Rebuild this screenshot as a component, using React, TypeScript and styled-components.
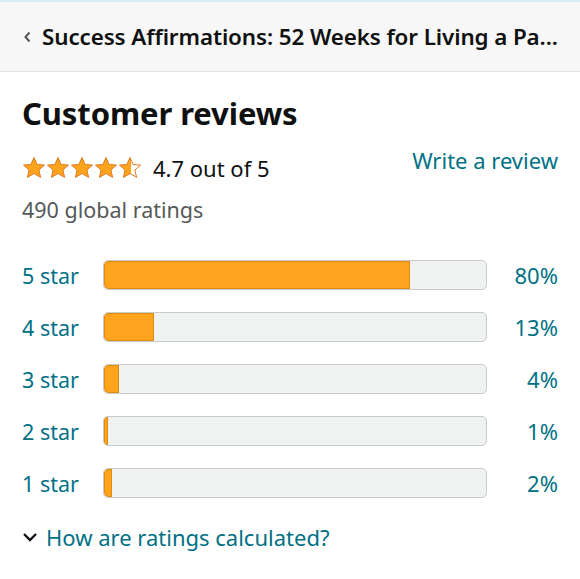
import React from "react";
import styled, { createGlobalStyle } from "styled-components";

const Global = createGlobalStyle`
  html, body { margin: 0; padding: 0; background: #fff; }
  body { font-family: "Noto Sans", "Open Sans", sans-serif; color: #0f1111; }
`;

const Page = styled.div`
  width: 580px;
  height: 579px;
  overflow: hidden;
  background: #fff;
`;

const Header = styled.header`
  height: 69px;
  background: #f7f7f7;
  border-top: 2px solid #d3eef1;
  border-bottom: 1px solid #e3e6e6;
  display: flex;
  align-items: center;
  padding: 0 22px;
  gap: 10px;
`;

const HeaderTitle = styled.h1`
  margin: 0;
  font-size: 22.4px;
  font-weight: 600;
  color: #0f1111;
  white-space: nowrap;
  overflow: hidden;
  text-overflow: ellipsis;
  letter-spacing: -0.1px;
`;

const Content = styled.main`
  padding: 18px 22px 0 22px;
  display: flex;
  flex-direction: column;
`;

const Title = styled.h2`
  margin: 0;
  font-size: 31px;
  font-weight: 700;
  line-height: 46px;
  letter-spacing: -0.1px;
`;

const SummaryRow = styled.div`
  display: flex;
  align-items: center;
  justify-content: space-between;
  margin-top: 17px;
  height: 30px;
`;

const StarsGroup = styled.div`
  display: flex;
  align-items: center;
  gap: 11px;
`;

const Stars = styled.div`
  display: flex;
  gap: 0px;
`;

const Avg = styled.span`
  font-size: 22px;
  color: #0f1111;
`;

const Link = styled.a`
  color: #007185;
  font-size: 22px;
  text-decoration: none;
`;

const WriteLink = styled(Link)`
  align-self: flex-start;
  margin-top: -8px;
`;

const Global2 = styled.div`
  font-size: 21.5px;
  color: #565959;
  margin-top: 13px;
  line-height: 28px;
`;

const Histogram = styled.div`
  margin-top: 36px;
  display: flex;
  flex-direction: column;
  gap: 22px;
`;

const Row = styled.div`
  display: grid;
  grid-template-columns: 81px 384px 1fr;
  align-items: center;
  height: 30px;
`;

const RowLabel = styled.span`
  font-size: 21.5px;
  color: #007185;
`;

const Track = styled.div`
  height: 30px;
  box-sizing: border-box;
  border: 1px solid #c9cccc;
  border-radius: 5px;
  background: #f0f2f2;
  overflow: hidden;
`;

const Fill = styled.div`
  height: 100%;
  box-sizing: border-box;
  background: #ffa41c;
  box-shadow: inset 0 0 0 1px #e28b12;
  border-radius: 5px 0 0 5px;
`;

const Pct = styled.span`
  font-size: 22px;
  color: #007185;
  text-align: right;
`;

const Footer = styled.div`
  margin-top: 24px;
  display: flex;
  align-items: center;
  gap: 8px;
`;

const StarIcon = ({ kind }: { kind: "full" | "half" }) => (
  <svg width="24" height="24" viewBox="0 0 24 24">
    <defs>
      <linearGradient id={`g-${kind}`} x1="0" x2="1" y1="0" y2="0">
        <stop offset={kind === "full" ? "1" : "0.55"} stopColor="#ffa41c" />
        <stop offset={kind === "full" ? "1" : "0.55"} stopColor="#fff" />
      </linearGradient>
    </defs>
    <path
      d="M12 1.5l3.1 7 7.4.6-5.6 4.9 1.7 7.4L12 17.5l-6.6 3.9 1.7-7.4L1.5 9.1l7.4-.6z"
      fill={`url(#g-${kind})`}
      stroke="#de7921"
      strokeWidth="1"
      strokeLinejoin="round"
    />
  </svg>
);

const data = [
  { label: "5 star", pct: 80 },
  { label: "4 star", pct: 13 },
  { label: "3 star", pct: 4 },
  { label: "2 star", pct: 1 },
  { label: "1 star", pct: 2 },
];

export default function App() {
  return (
    <Page>
      <Global />
      <Header>
        <svg width="10" height="14" viewBox="0 0 10 14">
          <path d="M7.5 2.5L3.5 7l4 4.5" fill="none" stroke="#555" strokeWidth="2" />
        </svg>
        <HeaderTitle>Success Affirmations: 52 Weeks for Living a Pa...</HeaderTitle>
      </Header>
      <Content>
        <Title>Customer reviews</Title>
        <SummaryRow>
          <StarsGroup>
            <Stars>
              <StarIcon kind="full" />
              <StarIcon kind="full" />
              <StarIcon kind="full" />
              <StarIcon kind="full" />
              <StarIcon kind="half" />
            </Stars>
            <Avg>4.7 out of 5</Avg>
          </StarsGroup>
          <WriteLink href="#">Write a review</WriteLink>
        </SummaryRow>
        <Global2>490 global ratings</Global2>
        <Histogram>
          {data.map((d) => (
            <Row key={d.label}>
              <RowLabel>{d.label}</RowLabel>
              <Track>
                <Fill style={{ width: `${d.pct}%` }} />
              </Track>
              <Pct>{d.pct}%</Pct>
            </Row>
          ))}
        </Histogram>
        <Footer>
          <svg width="16" height="12" viewBox="0 0 16 12">
            <path d="M2 3l6 6 6-6" fill="none" stroke="#0f1111" strokeWidth="2.4" />
          </svg>
          <Link href="#">How are ratings calculated?</Link>
        </Footer>
      </Content>
    </Page>
  );
}
